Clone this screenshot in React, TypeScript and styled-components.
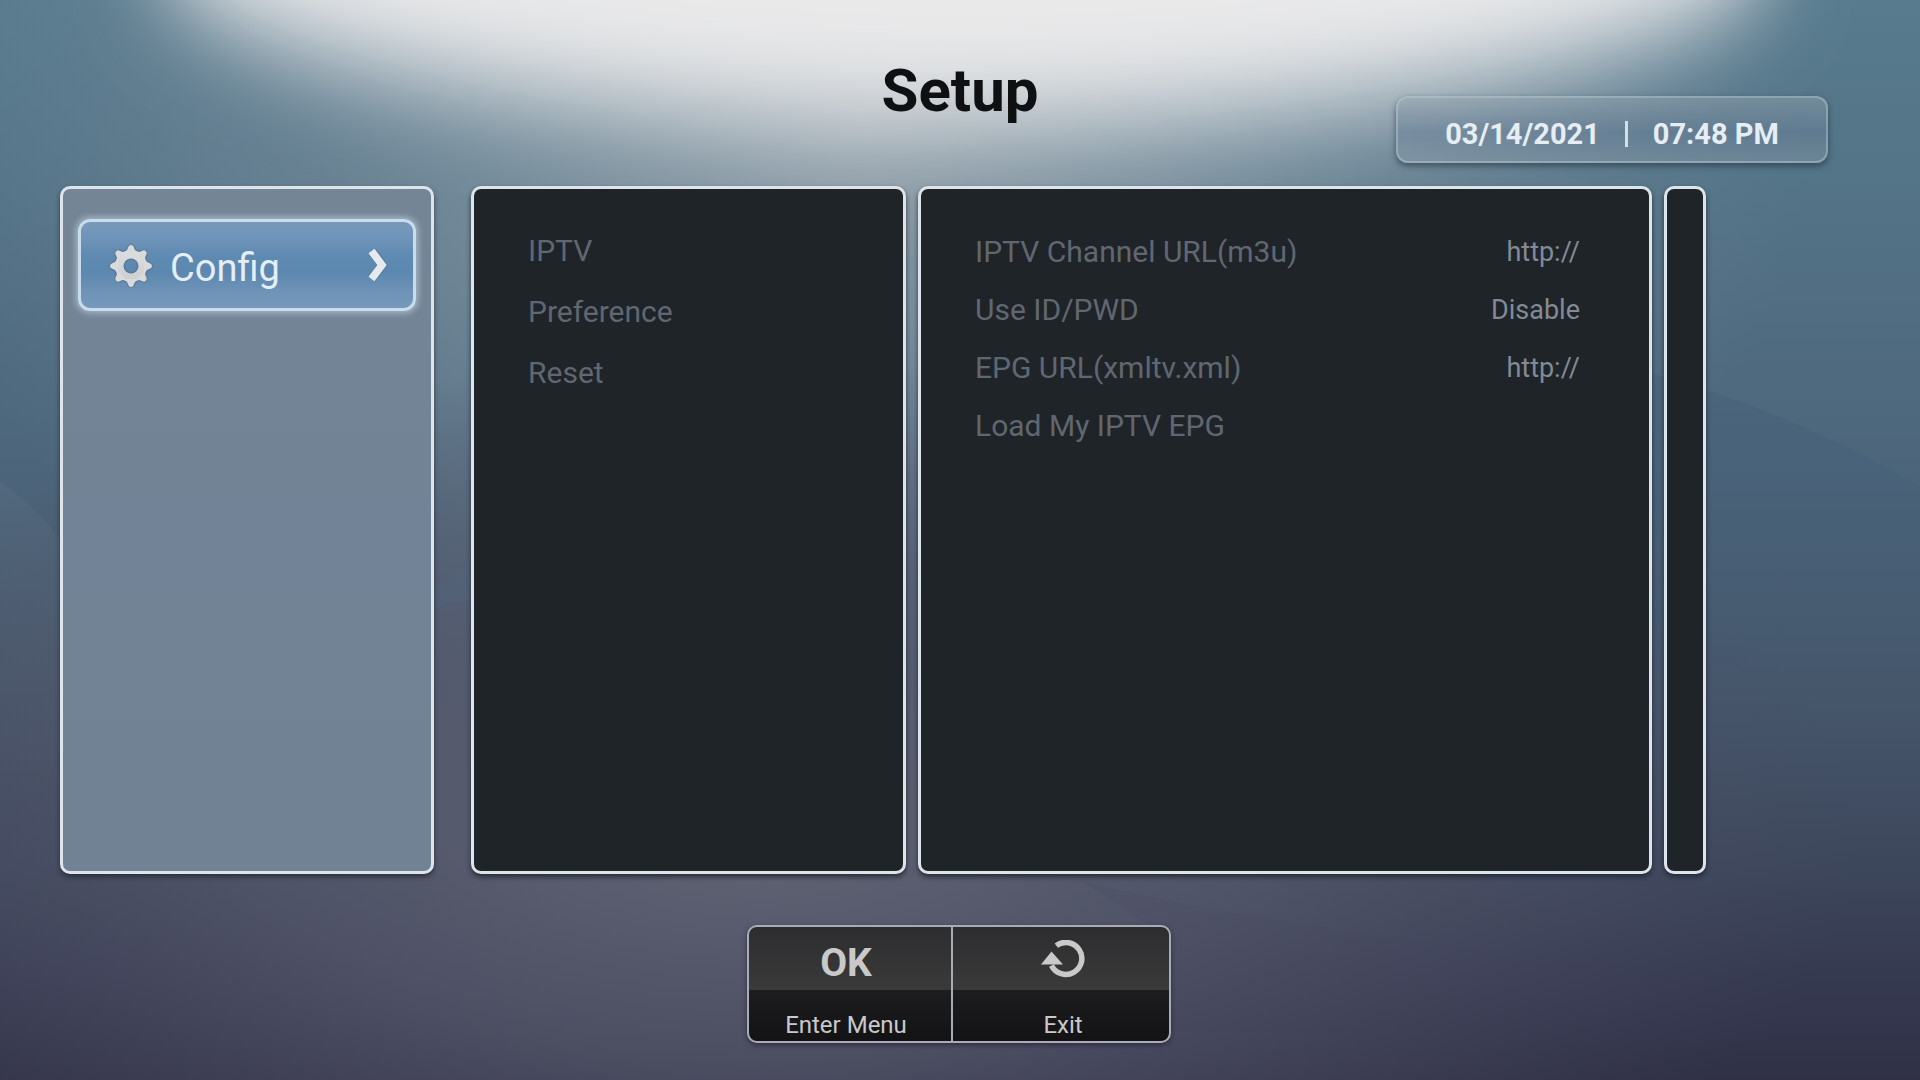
import React from "react";
import styled, { createGlobalStyle } from "styled-components";

const GlobalStyle = createGlobalStyle`
  *, *::before, *::after { box-sizing: border-box; }
  body { margin: 0; background: #3c3d54; font-family: Roboto, "Noto Sans", sans-serif; }
  h1, ul, dl, dd, dt { margin: 0; padding: 0; }
  ul { list-style: none; }
  button { font: inherit; color: inherit; cursor: pointer; }
`;

const Screen = styled.div`
  position: relative;
  isolation: isolate;
  display: flex;
  flex-direction: column;
  min-height: 100vh;
  overflow: hidden;
`;

const BackdropArt = styled.svg`
  position: absolute;
  inset: 0;
  z-index: -1;
  width: 100%;
  height: 100%;
`;

const Header = styled.header`
  display: grid;
  grid-template-columns: 1fr auto 1fr;
  align-items: start;
  height: 186px;
  padding: 0 92px;
`;

const Title = styled.h1`
  grid-column: 2;
  padding-top: 55px;
  color: #0e1012;
  font-size: 60px;
  line-height: 72px;
  font-weight: 700;
`;

const Clock = styled.div`
  grid-column: 3;
  justify-self: end;
  display: flex;
  align-items: center;
  justify-content: center;
  gap: 25px;
  width: 432px;
  height: 67px;
  margin-top: 96px;
  padding-top: 8px;
  border: 2px solid rgba(190, 208, 220, 0.4);
  border-radius: 12px;
  background: linear-gradient(rgba(150, 164, 174, 0.45), rgba(105, 128, 152, 0.5) 55%, rgba(145, 160, 172, 0.4));
  box-shadow: 0 3px 6px rgba(30, 45, 60, 0.6);
  color: #e6edf3;
  font-size: 29px;
  line-height: 36px;
  font-weight: 700;
`;

const Separator = styled.span`
  width: 3px;
  height: 26px;
  background: #d3dee7;
`;

const Main = styled.main`
  flex: 1;
  display: grid;
  grid-template-columns: minmax(0, 374fr) minmax(0, 1235fr);
  gap: 37px;
  padding: 0 214px 0 60px;
`;

const Panels = styled.div`
  display: grid;
  grid-template-columns: minmax(0, 435fr) minmax(0, 734fr) 42px;
  gap: 12px;
`;

const Panel = styled.section`
  border: 3px solid #dde4ea;
  border-radius: 10px;
  background: #1f2428;
  box-shadow: 0 3px 5px rgba(30, 35, 45, 0.8);
`;

const Sidebar = styled.nav`
  padding: 30px 15px;
  border: 3px solid #dde4ea;
  border-radius: 10px;
  background: linear-gradient(#748595, #728397 50%, #708293);
  box-shadow: 0 3px 5px rgba(30, 35, 45, 0.7);
`;

const ConfigButton = styled.button`
  display: flex;
  align-items: center;
  gap: 17px;
  width: 100%;
  height: 92px;
  padding: 0 25px 0 28px;
  border: 3px solid #c8dcec;
  border-radius: 12px;
  background: linear-gradient(#7799bb, #6f94b9 20%, #5f8ab2 38%, #5c87af 58%, #6f94b7 82%, #7699ba);
  box-shadow: 0 0 6px 2px rgba(200, 222, 238, 0.6);
  color: #e4eef7;
  font-size: 38px;
  line-height: 48px;
  text-align: left;
`;

const ConfigLabel = styled.span`
  flex: 1;
  padding-top: 6px;
`;

const MenuList = styled.ul`
  padding: 31px 53px 0 54px;
`;

const MenuItem = styled.button`
  display: block;
  width: 100%;
  height: 61px;
  padding: 0;
  border: 0;
  background: none;
  color: #606771;
  font-size: 30px;
  line-height: 61px;
  text-align: left;
`;

const SettingList = styled.dl`
  padding: 34px 69px 0 54px;
`;

const Setting = styled.div`
  display: flex;
  justify-content: space-between;
  height: 58px;
  line-height: 58px;
`;

const SettingName = styled.dt`
  color: #606771;
  font-size: 30px;
`;

const SettingValue = styled.dd`
  color: #828b95;
  font-size: 27px;
`;

const Footer = styled.footer`
  display: flex;
  justify-content: center;
  height: 206px;
  padding: 51px 2px 0 0;
`;

const KeyBar = styled.div`
  display: flex;
  height: 118px;
  border: 2px solid #a9acb6;
  border-radius: 10px;
  overflow: hidden;
  background: linear-gradient(#2d2d2f, #3a3a3b 55%, #1d1d1f 55%, #131315);
  box-shadow: 0 2px 5px rgba(25, 25, 40, 0.6);
`;

const KeyButton = styled.button<{ $width: number }>`
  display: flex;
  flex-direction: column;
  align-items: center;
  justify-content: space-between;
  width: ${(p) => p.$width}px;
  padding: 8px 8px 2px 0;
  border: 0;
  background: none;
  color: #c9c9ca;
  font-size: 24px;
  line-height: 28px;

  & + & {
    padding: 8px 0 2px 4px;
    border-left: 2px solid #a9acb6;
  }
`;

const KeyCap = styled.span`
  display: flex;
  align-items: center;
  height: 56px;
  font-size: 39px;
  font-weight: 700;
`;

const KeySymbol = styled(KeyCap)`
  height: 50px;
`;

function Backdrop() {
  return (
    <BackdropArt viewBox="0 0 1920 1080" preserveAspectRatio="none" aria-hidden="true">
      <defs>
        <linearGradient id="base" x1="0" y1="0" x2="0" y2="1">
          <stop offset="0" stopColor="#587b8e" />
          <stop offset="0.2" stopColor="#537286" />
          <stop offset="0.45" stopColor="#4c6479" />
          <stop offset="0.65" stopColor="#465569" />
          <stop offset="0.8" stopColor="#3d475c" />
          <stop offset="0.9" stopColor="#363a51" />
          <stop offset="1" stopColor="#303147" />
        </linearGradient>
        <radialGradient id="halo" gradientUnits="userSpaceOnUse" cx="0" cy="0" r="1" gradientTransform="translate(860 120) scale(950 680)">
          <stop offset="0" stopColor="#96a3ac" stopOpacity="0.95" />
          <stop offset="0.4" stopColor="#8094a1" stopOpacity="0.7" />
          <stop offset="1" stopColor="#728898" stopOpacity="0" />
        </radialGradient>
        <radialGradient id="lower" gradientUnits="userSpaceOnUse" cx="0" cy="0" r="1" gradientTransform="translate(760 840) scale(1100 480)">
          <stop offset="0" stopColor="#626575" stopOpacity="0.95" />
          <stop offset="0.45" stopColor="#585a6d" stopOpacity="0.7" />
          <stop offset="1" stopColor="#4c4c62" stopOpacity="0" />
        </radialGradient>
        <linearGradient id="waveRight" x1="0" y1="0" x2="0" y2="1">
          <stop offset="0" stopColor="#3c5a76" stopOpacity="0.3" />
          <stop offset="0.6" stopColor="#3c5a76" stopOpacity="0.1" />
          <stop offset="1" stopColor="#3c5a76" stopOpacity="0" />
        </linearGradient>
        <linearGradient id="waveLeft" x1="0" y1="0" x2="0" y2="1">
          <stop offset="0" stopColor="#7b8798" stopOpacity="0.12" />
          <stop offset="1" stopColor="#7b8798" stopOpacity="0" />
        </linearGradient>
        <linearGradient id="waveLower" x1="0" y1="0" x2="1" y2="0">
          <stop offset="0" stopColor="#35364f" stopOpacity="0.1" />
          <stop offset="1" stopColor="#35364f" stopOpacity="0" />
        </linearGradient>
        <filter id="soft" filterUnits="userSpaceOnUse" x="-200" y="-700" width="2320" height="1200">
          <feGaussianBlur stdDeviation="40 50" />
        </filter>
      </defs>
      <rect width="1920" height="1080" fill="url(#base)" />
      <rect width="1920" height="1080" fill="url(#halo)" />
      <rect width="1920" height="1080" fill="url(#lower)" />
      <path d="M160 -400 V-50 A800 172 0 0 0 1770 -50 V-400Z" fill="#e9e9ea" filter="url(#soft)" />
      <path d="M1640 370 Q1790 410 1920 486 V860 H1640Z" fill="url(#waveRight)" />
      <path d="M0 482 Q40 510 60 540 V800 H0Z" fill="url(#waveLeft)" />
      <path d="M434 592 Q455 575 471 560 V600 Q450 600 434 610Z" fill="#4c6d89" opacity="0.2" />
      <path d="M1080 880 Q1250 925 1600 960 L1600 1030 Q1400 1034 1171 1032 V940Z" fill="url(#waveLower)" />
    </BackdropArt>
  );
}

const toothAngles = [0, 45, 90, 135, 180, 225, 270, 315];

const GearSvg = styled.svg`
  filter: drop-shadow(0 0 1px #4a5d6e);
`;

function GearIcon() {
  return (
    <GearSvg width="44" height="46" viewBox="0 0 44 46" aria-hidden="true">
      <defs>
        <mask id="gearHole">
          <rect width="44" height="46" fill="#fff" />
          <circle cx="22" cy="24" r="7.5" fill="#000" />
        </mask>
        <linearGradient id="gearFill" gradientUnits="userSpaceOnUse" x1="0" y1="2" x2="0" y2="46">
          <stop offset="0" stopColor="#e0e1e2" />
          <stop offset="1" stopColor="#c9cbcd" />
        </linearGradient>
      </defs>
      <g mask="url(#gearHole)">
        <circle cx="22" cy="24" r="16" fill="url(#gearFill)" />
        {toothAngles.map((a) => (
          <path
            key={a}
            d="M14.500 11 Q18.300 9 19.200 5.200 Q19.800 3 22 3 Q24.200 3 24.800 5.200 Q25.700 9 29.500 11Z"
            fill="#d8dadb"
            transform={`rotate(${a} 22 24)`}
          />
        ))}
      </g>
    </GearSvg>
  );
}

function ChevronIcon() {
  return (
    <svg width="20" height="36" viewBox="0 0 20 36" aria-hidden="true">
      <path d="M4 4 L14.500 18 L4 32" fill="none" stroke="#4d7091" strokeWidth="9" opacity="0.4" />
      <path d="M3.500 4 L14 18 L3.500 32" fill="none" stroke="#e6eaee" strokeWidth="7.500" />
    </svg>
  );
}

function ReturnIcon() {
  return (
    <svg width="44" height="40" viewBox="0 0 44 40" aria-hidden="true">
      <path d="M15.300 5.600 A16 16 0 1 1 10.500 25.500" fill="none" stroke="#c9c9ca" strokeWidth="5.500" />
      <path d="M0 24.500 L10.500 11.500 L22 24.500Z" fill="#c9c9ca" />
    </svg>
  );
}

const menu = ["IPTV", "Preference", "Reset"];

const settings = [
  { name: "IPTV Channel URL(m3u)", value: "http://" },
  { name: "Use ID/PWD", value: "Disable" },
  { name: "EPG URL(xmltv.xml)", value: "http://" },
  { name: "Load My IPTV EPG", value: "" },
];

export default function App() {
  return (
    <>
      <GlobalStyle />
      <Screen>
        <Backdrop />
        <Header>
          <Title>Setup</Title>
          <Clock>
            <span>03/14/2021</span>
            <Separator />
            <span>07:48 PM</span>
          </Clock>
        </Header>
        <Main>
          <Sidebar>
            <ConfigButton type="button">
              <GearIcon />
              <ConfigLabel>Config</ConfigLabel>
              <ChevronIcon />
            </ConfigButton>
          </Sidebar>
          <Panels>
            <Panel>
              <MenuList>
                {menu.map((item) => (
                  <li key={item}>
                    <MenuItem type="button">{item}</MenuItem>
                  </li>
                ))}
              </MenuList>
            </Panel>
            <Panel>
              <SettingList>
                {settings.map((s) => (
                  <Setting key={s.name}>
                    <SettingName>{s.name}</SettingName>
                    <SettingValue>{s.value}</SettingValue>
                  </Setting>
                ))}
              </SettingList>
            </Panel>
            <Panel />
          </Panels>
        </Main>
        <Footer>
          <KeyBar>
            <KeyButton type="button" $width={202}>
              <KeyCap>OK</KeyCap>
              <span>Enter Menu</span>
            </KeyButton>
            <KeyButton type="button" $width={218}>
              <KeySymbol>
                <ReturnIcon />
              </KeySymbol>
              <span>Exit</span>
            </KeyButton>
          </KeyBar>
        </Footer>
      </Screen>
    </>
  );
}
